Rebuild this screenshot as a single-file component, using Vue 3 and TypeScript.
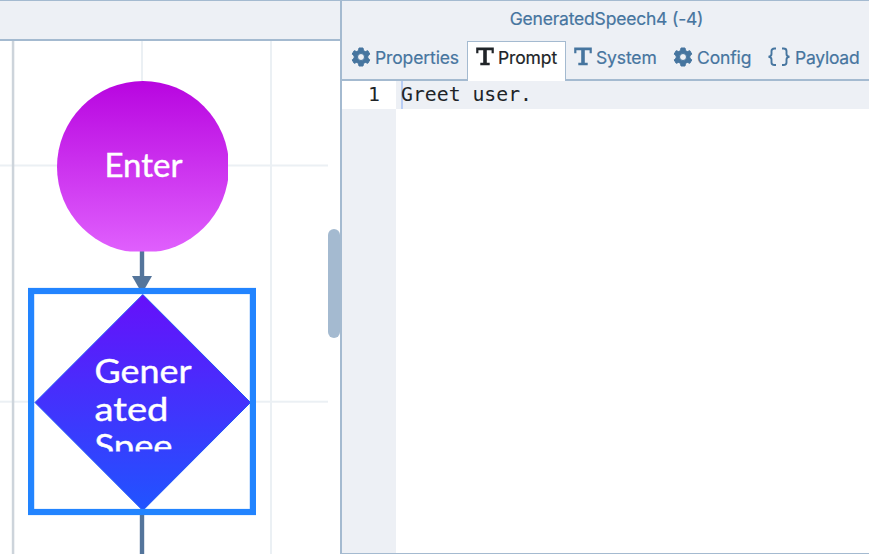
<script setup lang="ts">
import { ref } from 'vue'

type Icon = 'gear' | 'type' | 'braces'
interface Tab { label: string; icon: Icon }

const tabs: Tab[] = [
  { label: 'Properties', icon: 'gear' },
  { label: 'Prompt', icon: 'type' },
  { label: 'System', icon: 'type' },
  { label: 'Config', icon: 'gear' },
  { label: 'Payload', icon: 'braces' },
]
const active = ref('Prompt')
</script>

<template>
  <div class="app">
    <section class="graph">
      <div class="toolbar"></div>
      <div class="canvas">
        <svg class="diagram" width="328" height="513" viewBox="0 41 328 513">
          <defs>
            <linearGradient id="enterFill" x1="0" y1="0" x2="0" y2="1">
              <stop offset="0" stop-color="#b805e0" />
              <stop offset="1" stop-color="#e060fd" />
            </linearGradient>
            <linearGradient id="speechFill" x1="0" y1="0" x2="0" y2="1">
              <stop offset="0" stop-color="#6610fa" />
              <stop offset="1" stop-color="#2054ff" />
            </linearGradient>
            <clipPath id="circleClip"><rect x="56" y="81" width="172" height="170.5" /></clipPath>
            <clipPath id="labelClip"><rect x="90" y="350" width="110" height="101.5" /></clipPath>
          </defs>
          <g fill="#ebf0f4">
            <rect x="141" y="41" width="2" height="513" />
            <rect x="270" y="41" width="2" height="513" />
            <rect x="0" y="164.5" width="328" height="2" />
            <rect x="0" y="400.7" width="328" height="2" />
          </g>
          <rect x="11.8" y="41" width="2.5" height="513" fill="#cdd4db" />
          <rect x="139.8" y="250" width="4.4" height="28" fill="#54759b" />
          <path d="M132 276h20l-8 14h-4z" fill="#54759b" />
          <rect x="139.8" y="514" width="4.4" height="40" fill="#54759b" />
          <circle cx="143" cy="167" r="86" fill="url(#enterFill)" clip-path="url(#circleClip)" />
          <text class="node-label" x="104.5" y="176.5" textLength="78" lengthAdjust="spacingAndGlyphs">Enter</text>
          <path d="M142.8 294.5L250.5 402.5L142.8 510.5L35 402.5z" fill="url(#speechFill)" stroke="#1c55f5" />
          <rect x="31.1" y="291" width="221.8" height="221" fill="none" stroke="#2284ff" stroke-width="6.2" />
          <g class="node-label" clip-path="url(#labelClip)">
            <text x="94.5" y="382.5" textLength="97" lengthAdjust="spacingAndGlyphs">Gener</text>
            <text x="94.5" y="420.5" textLength="74" lengthAdjust="spacingAndGlyphs">ated</text>
            <text x="94.5" y="457.5" textLength="78" lengthAdjust="spacingAndGlyphs">Spee</text>
          </g>
        </svg>
        <div class="scroll"><div class="thumb"></div></div>
      </div>
    </section>
    <section class="inspector">
      <header class="title"><span>GeneratedSpeech4 (-4)</span></header>
      <nav class="tabs">
        <button
          v-for="tab in tabs"
          :key="tab.label"
          :class="['tab', tab.label.toLowerCase(), { active: active === tab.label }]"
          @click="active = tab.label"
        >
          <svg v-if="tab.icon === 'gear'" class="icon" width="20" height="20" viewBox="0 0 20 20">
            <path
              fill="currentColor" stroke="currentColor" stroke-width="1" stroke-linejoin="round" fill-rule="evenodd"
              d="M8 1h4l.5 2.6 1.8 1 2.5-.9 2 3.4-2 1.8v2.200l2 1.800-2 3.400-2.500-.9-1.800 1L12 19H8l-.5-2.600-1.800-1-2.500.9-2-3.400 2-1.800V8.900l-2-1.800 2-3.400 2.500.9 1.800-1zM10 6.500a3.500 3.500 0 1 0 0 7 3.500 3.500 0 0 0 0-7z"
            />
          </svg>
          <svg v-else-if="tab.icon === 'type'" class="icon" width="18" height="19" viewBox="0 0 18 19">
            <path fill="currentColor" d="M.2.5h17.600v5.700h-2.200V3.200h-4.800v12.500h2.900v2.500H4.300v-2.500h2.900V3.200H2.400v3H.2z" />
          </svg>
          <svg v-else class="icon" width="24" height="20" viewBox="0 0 24 20">
            <path
              fill="none" stroke="currentColor" stroke-width="1.900"
              d="M9 1.500H7.500Q4.500 1.500 4.500 4v3Q4.500 9.500 1.500 9.700Q4.500 10 4.500 12.500v3Q4.500 18 7.500 18H9M15 1.500h1.500Q19.500 1.500 19.500 4v3Q19.500 9.500 22.500 9.700Q19.500 10 19.500 12.500v3Q19.500 18 16.500 18H15"
            />
          </svg>
          <span class="label">{{ tab.label }}</span>
        </button>
      </nav>
      <div class="editor">
        <div class="gutter"><div class="line-number">1</div></div>
        <div class="code"><div class="line">Greet user.</div></div>
      </div>
    </section>
  </div>
</template>

<style>
body { margin: 0; overflow: hidden; }
</style>

<style scoped>
.app {
  display: grid;
  grid-template-columns: 340px 1fr;
  height: 554px;
  box-sizing: border-box;
  border-top: 1px solid #a4bad0;
  background: #fff;
  font-family: Inter, "Liberation Sans", sans-serif;
  color: #46759f;
}
.graph { display: flex; flex-direction: column; min-width: 0; }
.toolbar { height: 38px; flex: none; background: #edf0f5; border-bottom: 2px solid #a4bad0; }
.canvas { display: flex; flex: 1; }
.diagram { display: block; }
.node-label {
  font-family: "Century Gothic", Lato, sans-serif;
  font-size: 33px;
  fill: #fff;
  stroke: #fff;
  stroke-width: 0.4px;
}
.scroll { width: 12px; padding-top: 188px; }
.thumb { height: 109px; border-radius: 6px; background: #a4bad0; }
.inspector {
  display: flex;
  flex-direction: column;
  min-width: 0;
  border-left: 2px solid #a4bad0;
}
.title {
  height: 40px;
  flex: none;
  box-sizing: border-box;
  padding: 7px 0 0 2px;
  background: #edf0f5;
  text-align: center;
  font-size: 17.5px;
  line-height: 22px;
  letter-spacing: -0.2px;
  -webkit-text-stroke: 0.2px currentColor;
}
.tabs {
  display: flex;
  height: 40px;
  flex: none;
  box-sizing: border-box;
  background: linear-gradient(#a4bad0, #a4bad0) bottom / 100% 2px no-repeat #edf0f5;
}
.tab {
  display: flex;
  align-items: flex-start;
  box-sizing: border-box;
  height: 40px;
  padding: 6px 0 0 9px;
  border: 0;
  background: none;
  color: inherit;
  font: inherit;
  font-size: 17.5px;
  line-height: 22px;
  white-space: nowrap;
}
.properties { width: 125px; }
.prompt { width: 99px; }
.system { width: 98px; }
.config { width: 94px; }
.payload { width: 111px; }
.active { background: #fff; color: #202428; border: 1px solid #a4bad0; border-bottom: 0; padding: 5px 0 0 8px; }
.system { padding-left: 8px; }
.icon { flex: none; margin-right: 4px; }
.label { letter-spacing: -0.12px; -webkit-text-stroke: 0.2px currentColor; }
.payload .label { letter-spacing: -0.25px; }
.editor {
  display: flex;
  flex: 1;
  border-bottom: 1px solid #a4bad0;
  color: #202428;
  font: 19.8px/28px "DejaVu Sans Mono", monospace;
}
.gutter { width: 54px; background: #edf0f5; }
.line-number { height: 28px; padding-right: 16px; background: #fff; text-align: right; }
.code { flex: 1; }
.line {
  height: 28px;
  padding-left: 5px;
  background: linear-gradient(#b8cdf5, #b8cdf5) 5px 0 / 2px 100% no-repeat #edf0f5;
  white-space: pre;
}
</style>
